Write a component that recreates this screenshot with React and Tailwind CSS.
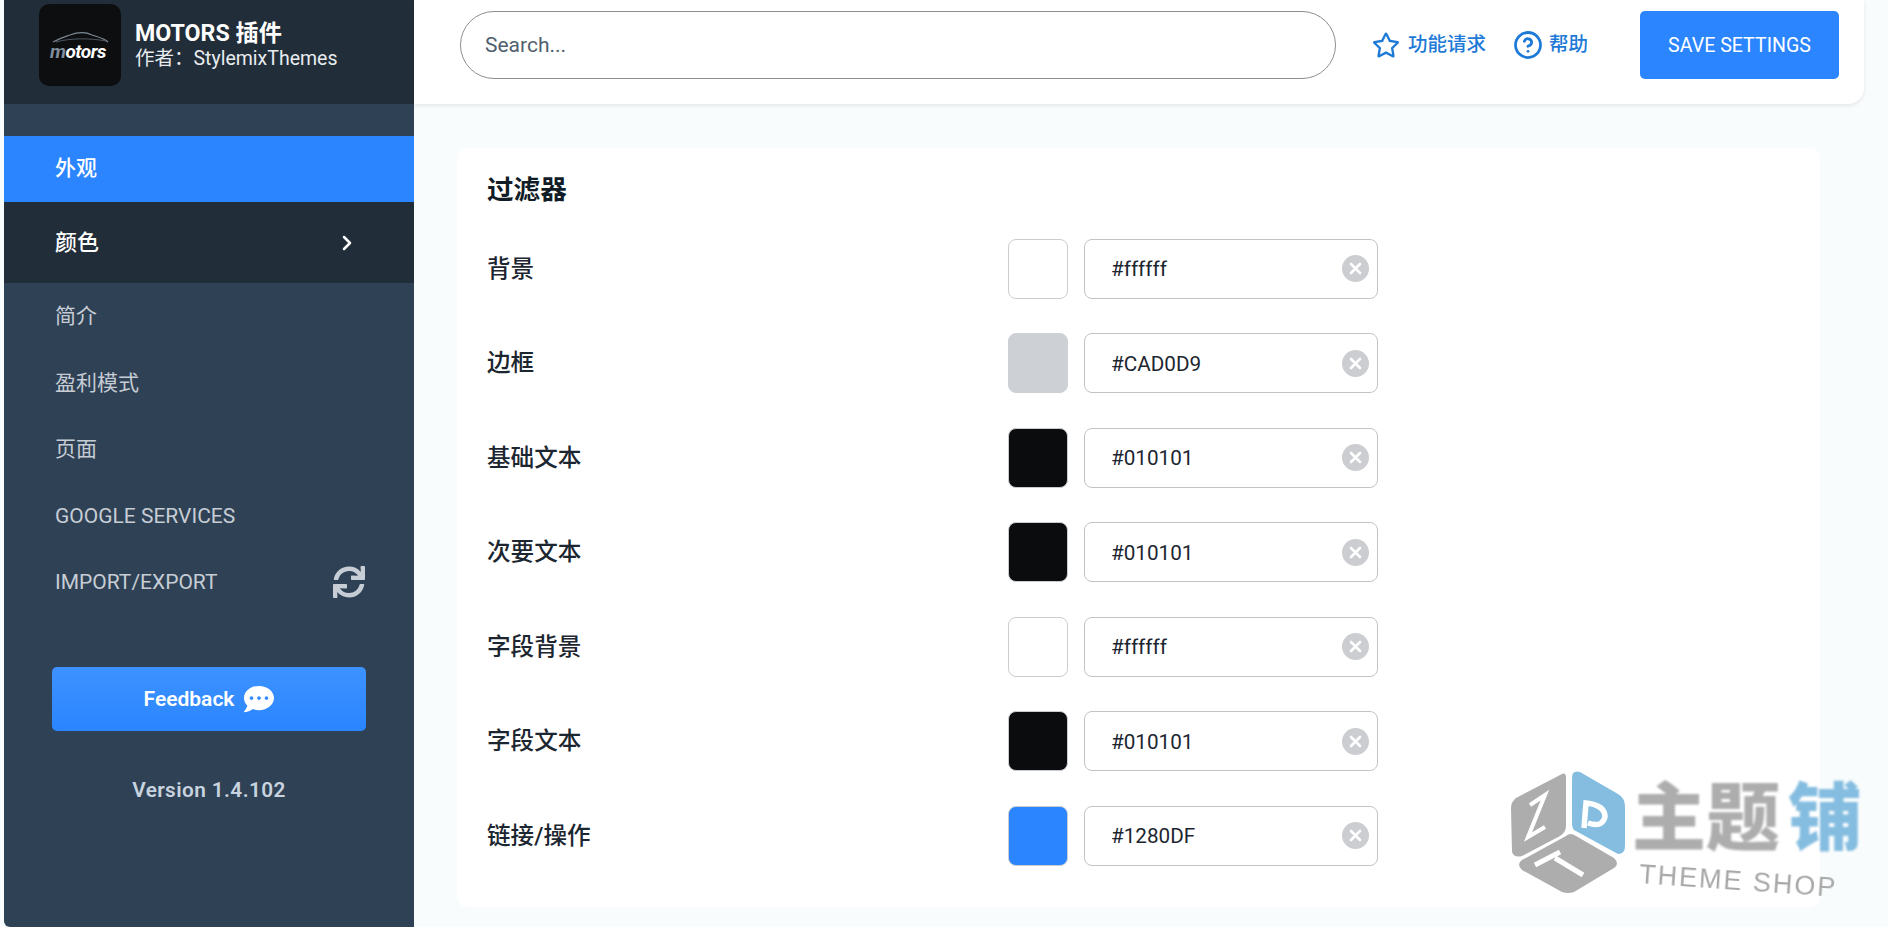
import React from "react";
import { FaSync, FaCommentDots, FaRegStar } from "react-icons/fa";
import { ChevronRight, CircleHelp } from "lucide-react";

const font = "font-['Roboto','Noto_Sans_CJK_SC',sans-serif]";

const menu = ["简介", "盈利模式", "页面", "GOOGLE SERVICES"];

const rows = [
  { label: "背景", value: "#ffffff", swatch: "bg-white border border-[#c9cdd1]" },
  { label: "边框", value: "#CAD0D9", swatch: "bg-[#cdd1d6] border border-[#cdd1d6]" },
  { label: "基础文本", value: "#010101", swatch: "bg-[#0b0c0e] border border-[#c9cdd1]" },
  { label: "次要文本", value: "#010101", swatch: "bg-[#0b0c0e] border border-[#c9cdd1]" },
  { label: "字段背景", value: "#ffffff", swatch: "bg-white border border-[#c9cdd1]" },
  { label: "字段文本", value: "#010101", swatch: "bg-[#0b0c0e] border border-[#c9cdd1]" },
  { label: "链接/操作", value: "#1280DF", swatch: "bg-[#2a85ff] border border-[#c9cdd1]" },
];

const Logo = () => (
  <div className="w-[82px] h-[82px] rounded-[10px] bg-[#0d0e10] flex flex-col items-center justify-center shrink-0">
    <svg width="60" height="14" viewBox="0 0 60 14" fill="none">
      <path d="M3 12 C10 8 14 7 20 5 C28 2 36 2 42 5 C48 7 54 8 58 12" stroke="#7d8a96" strokeWidth="1.2" />
      <path d="M6 12 C20 8 40 8 56 11" stroke="#4d5761" strokeWidth="1" />
    </svg>
    <div className="text-[19px] leading-[16px] font-bold italic text-white tracking-[-0.5px] pr-1">
      <span className="text-[#7f8d9c]">m</span>otors
    </div>
  </div>
);

const ClearIcon = () => (
  <svg width="27" height="27" viewBox="0 0 27 27" className="shrink-0">
    <circle cx="13.5" cy="13.5" r="13.5" fill="#cbcdd0" />
    <path d="M9 9 L18 18 M18 9 L9 18" stroke="#fff" strokeWidth="2.6" strokeLinecap="round" />
  </svg>
);

const Watermark = () => (
  <div className="absolute left-[1510px] top-[770px] w-[352px] h-[126px] pointer-events-none">
    <svg width="116" height="124" viewBox="0 0 116 124" className="absolute left-0 top-0">
      <path d="M52 4 Q56 2 56 8 L56 56 Q56 62 50 66 L12 86 Q4 88 2 82 L1 38 Q1 32 6 28 Z" fill="#adadad" />
      <path d="M62 8 Q62 0 70 2 L108 24 Q115 28 115 36 L115 76 Q115 84 108 84 L64 60 Q62 58 62 52 Z" fill="#85bde0" />
      <path d="M56 66 Q60 62 66 66 L104 88 Q110 94 104 98 L64 122 Q58 124 52 122 L12 100 Q6 94 12 90 Z" fill="#adadad" />
      <path d="M20 35 L35 25 L18 67 L35 57" stroke="#fff" strokeWidth="4" fill="none" />
      <path d="M74 58 L76 33 Q95 35 95 47 Q92 58 78 53" stroke="#fff" strokeWidth="5.5" fill="none" />
      <path d="M25 95 L50 82 M45 88 L73 105" stroke="#fff" strokeWidth="5" fill="none" />
    </svg>
    <div className="absolute left-[122px] top-[7px] text-[74px] leading-[84px] font-black text-[#adadad] whitespace-nowrap blur-[0.8px]">
      主题<span className="ml-2 text-[#85bde0]">铺</span>
    </div>
    <div className="absolute left-[129px] top-[96px] text-[27px] leading-[30px] text-[#a8a8a8] tracking-[2px] rotate-[4deg] whitespace-nowrap blur-[0.5px] font-['Liberation_Sans',sans-serif]">
      THEME SHOP
    </div>
  </div>
);

export default function App() {
  return (
    <div className={`${font} relative flex w-full h-[927px] overflow-hidden bg-[#f8fcfd] pl-1`}>
      {/* sidebar */}
      <aside className="w-[410px] shrink-0 bg-[#2f4155] rounded-bl-md flex flex-col">
        <div className="h-[104px] bg-[#212d39] flex items-start pt-1 pl-[35px] gap-[14px]">
          <Logo />
          <div className="pt-[15px]">
            <div className="text-[23.2px] leading-[28px] font-bold text-white">MOTORS 插件</div>
            <div className="text-[19.5px] leading-[24px] text-[#e8ecef]">作者：StylemixThemes</div>
          </div>
        </div>

        <div className="mt-8 h-[66px] bg-[#2a85ff] flex items-center pl-[51px] text-[21px] text-white font-medium">外观</div>
        <div className="h-[81px] bg-[#212d39] flex items-center justify-between pl-[51px] pr-[55px] text-[22px] text-white font-medium">
          颜色
          <ChevronRight size={24} strokeWidth={2.5} />
        </div>

        <div>
          {menu.map((item) => (
            <div key={item} className="h-[66.4px] flex items-center pl-[51px] pt-[2px] text-[21px] text-[#c6cdd4]">
              {item}
            </div>
          ))}
          <div className="h-[66.4px] flex items-center justify-between pl-[51px] pr-[49px] text-[21px] text-[#c6cdd4]">
            <span className="pt-[2px]">IMPORT/EXPORT</span>
            <FaSync size={32} />
          </div>
        </div>

        <button className="mt-[52px] ml-[48px] w-[314px] h-[64px] rounded-[5px] bg-linear-to-b from-[#3d92ff] to-[#2a85ff] flex items-center justify-center gap-[10px] text-[21px] font-semibold text-white">
          <span className="pt-[2px]">Feedback</span>
          <FaCommentDots size={30} />
        </button>

        <div className="mt-[45px] ml-[48px] w-[314px] text-center text-[20.8px] leading-[28px] font-semibold text-[#c7d3df] tracking-[0.4px]">
          Version 1.4.102
        </div>
      </aside>

      {/* main */}
      <main className="flex-1 min-w-0">
        <header className="h-[104px] mr-6 bg-white rounded-br-2xl shadow-[0_2px_4px_rgba(0,0,0,0.08)] flex items-center pl-[46px] pr-[25px] pb-[14px]">
          <div className="w-[876px] h-[68px] rounded-full border border-[#8a8f94] flex items-center pl-6 pt-[2px] text-[21px] text-[#50606e]">
            Search...
          </div>
          <a className="ml-9 flex items-center gap-2 text-[19.5px] text-[#1d7ad6] font-medium">
            <FaRegStar size={28} />
            功能请求
          </a>
          <a className="ml-[27px] flex items-center gap-[6px] text-[19.5px] text-[#1d7ad6] font-medium">
            <CircleHelp size={30} strokeWidth={2.2} />
            帮助
          </a>
          <button className="ml-auto w-[199px] h-[68px] rounded-[5px] bg-[#2a85ff] pt-[2px] text-white text-[19.6px]">
            SAVE SETTINGS
          </button>
        </header>

        <section className="mt-11 ml-[43px] w-[1363px] h-[759px] bg-white rounded-[10px] pl-[30px] pt-[26px] pr-8">
          <h2 className="text-[26.6px] leading-[32px] font-bold text-[#111c27]">过滤器</h2>
          <div className="mt-[32.7px] flex flex-col gap-[34.5px]">
            {rows.map((row) => (
              <div key={row.label} className="flex items-center h-[60px]">
                <div className="w-[521px] pt-[2px] text-[23.6px] text-[#1c2630] font-medium">{row.label}</div>
                <div className={`w-[60px] h-[60px] rounded-lg ${row.swatch}`} />
                <div className="ml-4 w-[294px] h-[60px] rounded-lg border border-[#c0c4c8] bg-white flex items-center justify-between pl-[26px] pr-2">
                  <span className="pt-[2px] text-[20.7px] text-[#1c2630]">{row.value}</span>
                  <ClearIcon />
                </div>
              </div>
            ))}
          </div>
        </section>
      </main>

      <Watermark />
    </div>
  );
}
